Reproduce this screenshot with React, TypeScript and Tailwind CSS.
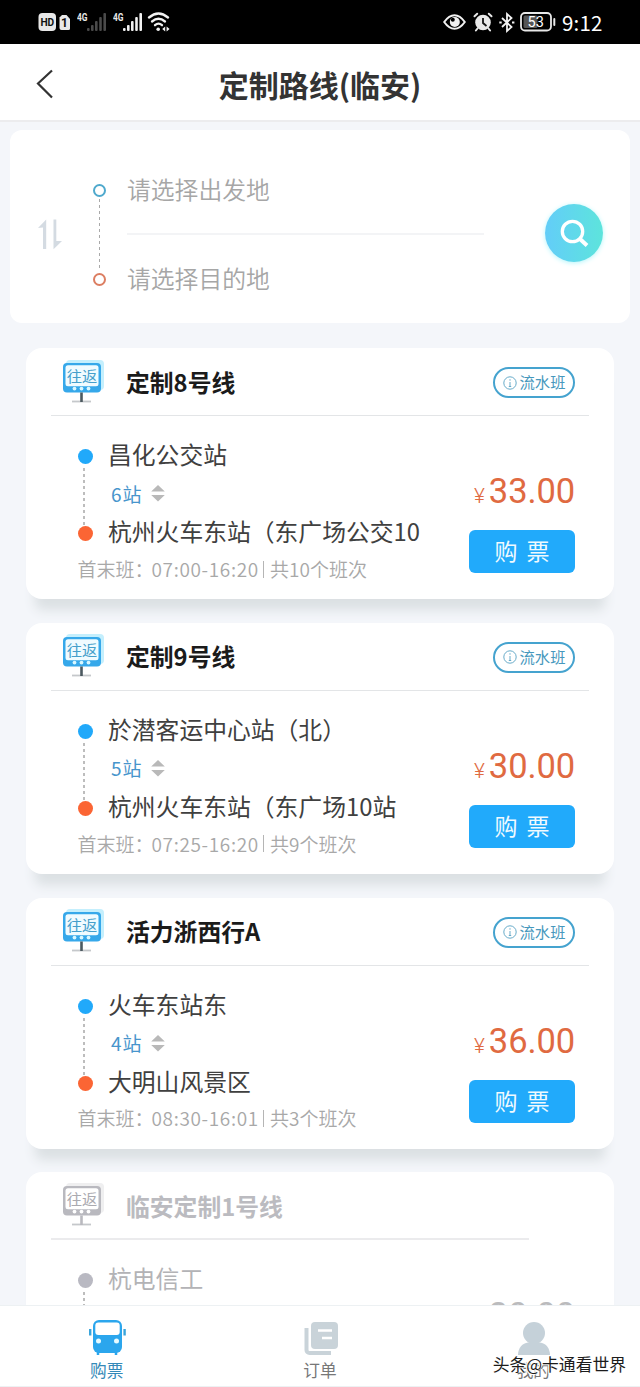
import React from 'react'
import clsx from 'clsx'

interface Line {
  name: string
  from: string
  to: string
  stops: number
  hours: string
  trips: number
  price: string
  disabled?: boolean
}

const lines: Line[] = [
  { name: '定制8号线', from: '昌化公交站', to: '杭州火车东站（东广场公交10', stops: 6, hours: '07:00-16:20', trips: 10, price: '33.00' },
  { name: '定制9号线', from: '於潜客运中心站（北）', to: '杭州火车东站（东广场10站', stops: 5, hours: '07:25-16:20', trips: 9, price: '30.00' },
  { name: '活力浙西行A', from: '火车东站东', to: '大明山风景区', stops: 4, hours: '08:30-16:01', trips: 3, price: '36.00' },
  { name: '临安定制1号线', from: '杭电信工', to: '', stops: 0, hours: '', trips: 0, price: '20.00', disabled: true },
]

const SignalIcon: React.FC<{ dim?: boolean }> = ({ dim }) => (
  <svg width="32" height="22" viewBox="0 0 32 22">
    <text x="0" y="10" fontSize="10.5" fontWeight="700" fill="#e8e8e8" textLength="10.5" lengthAdjust="spacingAndGlyphs" fontFamily="Roboto, sans-serif">4G</text>
    <g fill={dim ? '#4a4a4a' : '#f2f2f2'}>
      <rect x="10" y="17" width="2.6" height="3" rx="1" />
      <rect x="14" y="14" width="2.6" height="6" rx="1" />
      <rect x="18" y="10" width="2.6" height="10" rx="1" />
      <rect x="22.2" y="6" width="2.6" height="14" rx="1" />
      <rect x="26.4" y="2" width="2.6" height="18" rx="1" />
    </g>
  </svg>
)

const StatusBar = () => (
  <div className="flex h-11 shrink-0 items-center justify-between bg-black pl-[38px] pr-[38px] text-white">
    <div className="flex items-center">
      <svg width="33" height="20" viewBox="0 0 33 20">
        <rect x="0.5" y="1" width="17.5" height="18" rx="4" fill="#e8e8e8" />
        <text x="2.4" y="14.3" fontSize="11.5" fontWeight="700" fill="#111" textLength="13.8" lengthAdjust="spacingAndGlyphs" fontFamily="Roboto, sans-serif">HD</text>
        <path d="M24 3h4.500l3.500 4v9.500a1.500 1.500 0 0 1-1.500 1.500h-7a2 2 0 0 1-2-2V5.500z" fill="#e8e8e8" />
        <text x="23" y="15" fontSize="12" fontWeight="700" fill="#111" fontFamily="Roboto, sans-serif">1</text>
      </svg>
      <div className="ml-1.5 flex gap-1">
        <SignalIcon dim />
        <SignalIcon />
      </div>
      <svg className="ml-0.5" width="24" height="22" viewBox="0 0 24 22" fill="none" stroke="#f2f2f2" strokeWidth="2.3" strokeLinecap="round">
        <path d="M2 6.500Q11.500-1.500 21 6.500" />
        <path d="M5 10.500Q11.500 5 18 10.500" />
        <path d="M8 14.200Q11.500 11 15 14.200" />
        <circle cx="11.200" cy="18.300" r="1.800" fill="#f2f2f2" stroke="none" />
        <path d="M18.200 15.500v5l-3-2.500zM19.600 15.500v5l3-2.500z" fill="#f2f2f2" stroke="none" />
      </svg>
    </div>
    <div className="flex items-center">
      <svg width="23" height="18" viewBox="0 0 23 18" fill="none" stroke="#f2f2f2" strokeWidth="2">
        <path d="M1.200 9Q6 2.200 11.500 2.200T21.800 9Q17 15.800 11.500 15.800T1.200 9z" />
        <circle cx="11.800" cy="9" r="5" fill="#f2f2f2" stroke="none" />
        <circle cx="9.800" cy="6.800" r="2" fill="#000" stroke="none" />
      </svg>
      <svg className="ml-[7px]" width="20" height="20" viewBox="0 0 20 20">
        <circle cx="10" cy="10.500" r="7.800" fill="#e8e8e8" />
        <g fill="none" stroke="#e8e8e8" strokeWidth="2" strokeLinecap="round">
          <path d="M1.500 4.200 4.200 1.700M18.500 4.200l-2.700-2.500M4.500 16.500l-1.600 2M15.500 16.500l1.600 2" />
        </g>
        <path d="M10 6v5l3.500 3" fill="none" stroke="#111" strokeWidth="1.800" />
      </svg>
      <svg className="ml-1.5" width="16" height="21" viewBox="0 0 16 21" fill="none" stroke="#f2f2f2" strokeWidth="1.800">
        <path d="M3 6l9.500 9L8 19V2l4.500 4L3 15" />
        <path d="M.3 10.500h2.400M13 10.500h2.400" strokeWidth="2" />
      </svg>
      <svg className="ml-[5px]" width="36" height="20" viewBox="0 0 36 20">
        <rect x="1" y="1" width="30" height="17.500" rx="4" fill="none" stroke="#e8e8e8" strokeWidth="1.800" />
        <rect x="3.500" y="3.500" width="14" height="12.500" rx="1.500" fill="#555" />
        <rect x="33.300" y="6" width="2" height="8" rx="1" fill="#e8e8e8" />
        <text x="7.500" y="15" fontSize="14.500" fill="#fff" fontFamily="Roboto, sans-serif">53</text>
      </svg>
      <span className="ml-[6px] w-[40px] text-[20.500px] leading-none tracking-[0.2px]">9:12</span>
    </div>
  </div>
)

const SearchPanel = () => (
  <section className="mx-2.5 mt-2 flex h-[193px] shrink-0 items-center rounded-xl bg-white pl-7 pr-[27px]">
    <svg className="mt-4" width="24" height="31" viewBox="0 0 24 31" fill="#d4dbe2">
      <path d="M0 9 8.200.500V30H5V8.500z" />
      <path d="M15.500.500h2.800V22h5.700l-8.500 8.200z" />
    </svg>
    <div className="ml-[31px] mt-4 flex h-[102px] flex-col items-center">
      <span className="size-[13px] rounded-full border-2 border-[#4fa9cd]" />
      <span className="my-0.5 w-px flex-1 bg-[repeating-linear-gradient(to_bottom,#a9a9a9_0_3px,transparent_3px_6px)]" />
      <span className="size-[13px] rounded-full border-2 border-[#dc7e62]" />
    </div>
    <div className="ml-[21px] mt-[15px] w-[357px] text-[23.800px] font-[350] text-[#a6a6a6]">
      <div className="flex h-[57px] items-start leading-[30px]">
        <span className="-mt-px">请选择出发地</span>
      </div>
      <div className="mt-px border-t-2 border-[#f3f4f6]" />
      <div className="flex h-[58px] items-end leading-[30px]">请选择目的地</div>
    </div>
    <button className="ml-[61px] mt-3 flex size-[58px] items-center justify-center rounded-full bg-linear-to-r from-[#63cdf8] to-[#5de4dc] shadow-[0_1px_5px_#b5f6fb]">
      <svg width="30" height="30" viewBox="0 0 30 30" fill="none" stroke="white" strokeWidth="3.300">
        <circle cx="13.500" cy="13.500" r="10.200" />
        <path d="m21 21 7 6.500" strokeWidth="4" />
      </svg>
    </button>
  </section>
)

const StopSign: React.FC<{ disabled?: boolean }> = ({ disabled }) => {
  const main = disabled ? '#b9b9bf' : '#36a8ea'
  return (
    <svg width="44" height="46" viewBox="0 0 44 46">
      <rect x="4" y="1" width="38" height="30" rx="4" fill={disabled ? '#efeff0' : '#c4effd'} />
      <rect x="1" y="4" width="38" height="29.500" rx="4" fill={main} />
      <rect x="3.500" y="6.200" width="33" height="21" rx="2.500" fill={disabled ? '#fff' : '#f0fbff'} />
      <text x="4.700" y="22.800" fontSize="15.300" fill={disabled ? '#aaaab0' : '#459fcb'}>往返</text>
      <g fill={disabled ? '#fff' : '#d9f7ff'}>
        <circle cx="12.500" cy="29.600" r="1.900" />
        <circle cx="19.500" cy="29.600" r="1.900" />
        <circle cx="26.500" cy="29.600" r="1.900" />
      </g>
      <path d="M10 42.500h19" stroke="#c5c8cb" strokeWidth="1.800" />
      <path d="M19.500 33.500v9.500" stroke={disabled ? main : '#4c5960'} strokeWidth="2.600" />
    </svg>
  )
}

const LineCard: React.FC<{ line: Line }> = ({ line }) => {
  const { disabled } = line
  return (
    <article className="mx-[26px] h-[251px] shrink-0 rounded-[16px] bg-white shadow-[0_20px_12px_-9px_#dbe0e3]">
      <div
        className={clsx(
          'ml-[25px] flex h-[68px] items-center border-b',
          disabled ? 'mr-[85px] border-b-2 border-[#ebebed]' : 'mr-[25px] border-[#e3e5e7]'
        )}
      >
        <div className="ml-[11px]">
          <StopSign disabled={disabled} />
        </div>
        <h2 className={clsx('ml-[20px] flex-1 whitespace-nowrap text-[23.800px] font-bold', disabled ? 'text-[#bbbbc0]' : 'text-[#1b1b1b]')}>
          {line.name}
        </h2>
        {!disabled && (
          <span className="mr-[14px] mt-0.5 flex h-[31px] w-[82px] items-center justify-center gap-[3px] rounded-full border-2 border-[#45a3cf] text-[15.300px] text-[#4798bd]">
            <svg width="14" height="14" viewBox="0 0 14 14" fill="none" stroke="#68abc9">
              <circle cx="7" cy="7" r="6.200" />
              <path d="M7 6v4.500M7 3.200v1.500M5.800 10.500h2.400" />
            </svg>
            <span className="-mt-px leading-none">流水班</span>
          </span>
        )}
      </div>
      <div className="flex justify-between pl-[51.500px] pr-[39px] pt-[19px]">
        <div className="min-w-0">
          <div className="flex">
            <div className="flex h-[106px] w-[15px] flex-col items-center pt-[14px]">
              <span className={clsx('size-[15px] shrink-0 rounded-full', disabled ? 'bg-[#b9b9c2]' : 'bg-[#21a9fa]')} />
              <span className="mr-0.5 mt-1 w-[1.500px] flex-1 bg-[repeating-linear-gradient(to_bottom,#bdbdbd_0_3px,transparent_3px_6px)]" />
              <span className={clsx('size-[15px] shrink-0 rounded-full', disabled ? 'bg-[#b9b9c2]' : 'bg-[#fb6534]')} />
            </div>
            <div className={clsx('ml-[15.500px] whitespace-nowrap text-[23.800px]', disabled ? 'text-[#b3b3b6]' : 'text-[#404040]')}>
              <div className="h-[39px] leading-[38px]">{line.from}</div>
              <div className="flex h-[38px] items-center pl-[3px]">
                <span className="text-[19px] leading-none tracking-[0.900px] text-[#4795cc]">{line.stops}站</span>
                <svg className="ml-[9px]" width="14" height="18" viewBox="0 0 14 18" fill="#b9b9b9">
                  <path d="M7 1l6.800 6.500H.2zM7 17.500l6.800-6.500H.2z" />
                </svg>
              </div>
              <div className="h-[38px] leading-[38px]">{line.to}</div>
            </div>
          </div>
          <div className="flex h-[37px] items-center whitespace-nowrap pt-px text-[19px] font-[350] text-[#a8a8a8]">
            <span className="w-[74px]">首末班：</span>
            <span className="w-[108px] tracking-[0.650px]">{line.hours}</span>
            <span className="mx-[3px] h-[17px] w-[1.500px] bg-[#b5b5b5]" />
            <span className="ml-[3px]">共{line.trips}个班次</span>
          </div>
        </div>
        <div className="flex shrink-0 flex-col items-end">
          <div className={clsx('mt-[31px] flex h-12 items-baseline leading-[50px]', disabled ? 'text-[#bbbbbd]' : 'text-[#e06a41]')}>
            <span className="mr-[4px] font-['Roboto',sans-serif] text-[21px] font-light">¥</span>
            <span className="font-['Roboto',sans-serif] text-[34.500px] font-normal tracking-[-0.100px]">{line.price}</span>
          </div>
          <button className="mt-[16px] flex h-[43px] w-[106px] items-center justify-center gap-[9px] rounded-[6px] bg-[#21aafb] text-[23px] text-[#f0faff]">
            <span className="-mt-0.5">购</span>
            <span className="-mt-0.5">票</span>
          </button>
        </div>
      </div>
    </article>
  )
}

const TabBar = () => (
  <nav className="relative grid h-[82px] shrink-0 grid-cols-3 border-y border-[#edf1f3] bg-white text-[16.700px] text-[#777]">
    <div className="flex flex-col items-center pt-[13px] text-[#3489b8]">
      <svg width="38" height="37" viewBox="0 0 38 37">
        <rect x="5" y="1" width="29" height="33" rx="6" fill="#2ba6ed" />
        <path d="M10 36v-3M28 36v-3" stroke="#2ba6ed" strokeWidth="2.500" />
        <rect x="7.300" y="3.500" width="24.400" height="12.500" rx="3" fill="#fff" />
        <circle cx="10.500" cy="22" r="2.500" fill="#e8fbff" />
        <circle cx="28.500" cy="22" r="2.500" fill="#e8fbff" />
        <path d="M2.200 10v6.500M36.600 10v6.500" stroke="#3aa5db" strokeWidth="2.400" />
      </svg>
      <span className="mt-[3px] leading-[22px]">购票</span>
    </div>
    <div className="flex flex-col items-center pt-[15px]">
      <svg className="ml-[3px]" width="35" height="35" viewBox="0 0 35 35">
        <rect x="7" y="1" width="27" height="27" rx="4" fill="#c9d3d9" />
        <path d="M2.500 7v22a3 3 0 0 0 3 3H27" fill="none" stroke="#c9d3d9" strokeWidth="4" />
        <path d="M14 9.500h14M18 17h10" stroke="#fff" strokeWidth="2.400" />
      </svg>
      <span className="mt-[3px] leading-[22px]">订单</span>
    </div>
    <div className="flex flex-col items-center pt-[15px]">
      <svg className="ml-[2px]" width="34" height="35" viewBox="0 0 34 35" fill="#c5d1d9">
        <circle cx="17" cy="12" r="11" />
        <path d="M1 34c0-7 4.500-12 10-12.500h12c5.500.500 10 5.500 10 12.500z" />
      </svg>
      <span className="mt-[3px] leading-[22px]">我的</span>
    </div>
    <div className="absolute right-[14px] top-[46px] whitespace-nowrap text-[16.800px] leading-[24px] text-[#1c1c1c] [text-shadow:-1px_-1px_0_#fff,1px_-1px_0_#fff,-1px_1px_0_#fff]">
      头条@卡通看世界
    </div>
  </nav>
)

export default function App() {
  return (
    <div className="flex h-[1387px] w-[640px] flex-col overflow-hidden bg-[#f4f6fa] font-['Noto_Sans_CJK_SC',sans-serif]">
      <StatusBar />
      <header className="grid h-[78px] shrink-0 grid-cols-[1fr_auto_1fr] items-center border-b-2 border-[#ececee] bg-white pt-1">
        <svg className="ml-[36px]" width="18" height="30" viewBox="0 0 18 30" fill="none" stroke="#333" strokeWidth="2.200">
          <path d="M16 1.500 2 14.500 16 28.500" />
        </svg>
        <h1 className="text-[30px] font-bold leading-none text-[#333]">定制路线(临安)</h1>
      </header>
      <main className="flex min-h-0 flex-1 flex-col overflow-hidden">
        <SearchPanel />
        <div className="mt-[25px] flex flex-col gap-[23.800px]">
          {lines.map((line) => (
            <LineCard key={line.name} line={line} />
          ))}
        </div>
      </main>
      <TabBar />
    </div>
  )
}
